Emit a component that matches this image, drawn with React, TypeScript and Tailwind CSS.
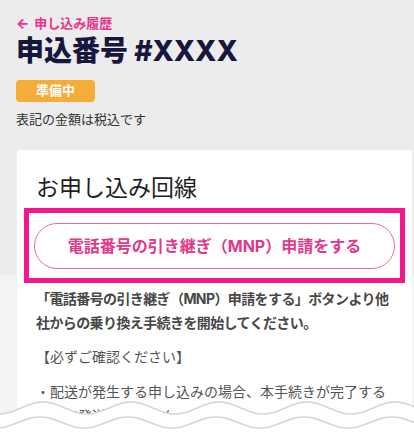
import React from 'react';

const FONT = '"Inter", "Noto Sans CJK JP", "Noto Sans", sans-serif';

// sine wave path across the width
const wavePath = (center: number, amp: number, phase: number, period: number, width: number) => {
  let d = '';
  for (let x = -2; x <= width + 2; x += 2) {
    const y = center - amp * Math.cos((2 * Math.PI * (x - phase)) / period);
    d += `${d ? 'L' : 'M'}${x} ${y.toFixed(2)} `;
  }
  return d;
};

const TornEdge = () => {
  const w = 414;
  const top = wavePath(18, 6, 43, 88, w);
  const second = wavePath(32.5, 5.5, 40, 88, w);
  return (
    <svg className="absolute bottom-0 left-0" width={w} height={44} viewBox={`0 0 ${w} 44`}>
      <path d={`${top} L${w + 2} 44 L-2 44 Z`} fill="#ffffff" />
      <path d={top} fill="none" stroke="#d6d6d6" strokeWidth={1.6} />
      <path d={second} fill="none" stroke="#d6d6d6" strokeWidth={1.6} />
    </svg>
  );
};

export default function App() {
  return (
    <div
      className="relative w-[414px] h-[434px] overflow-hidden bg-[linear-gradient(to_bottom,#ececec_275px,#f3f3f3_275px)]"
      style={{ fontFamily: FONT }}
    >
      <div className="px-4 pt-[13px]">
        <div className="flex items-center text-[13px] leading-5 font-bold text-[#e8358b]">
          <span className="mr-[5px] text-[14px] font-extrabold">←</span>
          <span>申し込み履歴</span>
        </div>
        <h1 className="text-[28px] leading-[36px] font-extrabold text-[#17173d]">
          申込番号 #XXXX
        </h1>
        <div className="mt-[11px] flex h-[22px] w-[79px] items-center justify-center rounded-[4px] bg-[#f5ac38] text-[13px] font-bold text-white">
          準備中
        </div>
        <p className="mt-[7px] text-[13px] leading-5 text-[#333333]">表記の金額は税込です</p>
      </div>

      <div className="ml-[17px] mr-[2px] mt-[21px] rounded-t-[3px] bg-white px-[19px] pt-[22px] pb-10">
        <h2 className="text-[23px] leading-8 font-normal text-[#1f1f1f]">お申し込み回線</h2>

        <div className="-mx-[12px] mt-[4px] border-[5px] border-[#f7158e] px-[5px] pt-[10px] pb-[9px]">
          <button className="flex h-[46px] w-full items-center justify-center rounded-full border border-[#e46ca3] bg-white text-[16px] font-bold text-[#e2378b]">
            電話番号の引き継ぎ（MNP）申請をする
          </button>
        </div>

        <p className="-mr-[4px] mt-[4px] text-[14px] leading-6 font-bold tracking-[-0.6px] text-[#474747]">
          「電話番号の引き継ぎ（MNP）申請をする」ボタンより他社からの乗り換え手続きを開始してください。
        </p>
        <p className="mt-[10px] text-[14px] leading-6 text-[#555555]">【必ずご確認ください】</p>
        <p className="mt-[11px] pl-[14px] -indent-[14px] text-[14px] leading-6 text-[#555555]">
          ・配送が発生する申し込みの場合、本手続きが完了するまで発送されません。
        </p>
      </div>

      <TornEdge />
    </div>
  );
}
